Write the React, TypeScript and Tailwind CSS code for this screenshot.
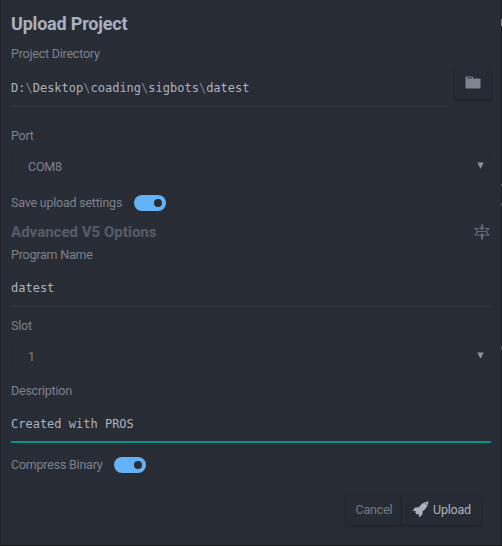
import type { ReactNode } from "react"

const Label = ({ children }: { children: ReactNode }) => (
  <div className="text-[12.5px] leading-4 tracking-[-0.22px] whitespace-nowrap text-[#7c818c]">{children}</div>
)

const TextField = ({ value, className }: { value: string; className: string }) => (
  <div
    className={`flex items-center whitespace-pre font-['DejaVu_Sans_Mono',monospace] text-[12px] text-[#abb2bf] ${className}`}
  >
    {value.split(/(\\)/).map((part, i) => (
      <span key={i} className={part === "\\" ? "text-[#7c818c]" : ""}>
        {part}
      </span>
    ))}
  </div>
)

const SelectField = ({ value }: { value: string }) => (
  <div className="flex h-[31px] items-center justify-between rounded-t-[3px] border border-b-0 border-[#262a32] pr-[6px] pb-px pl-[16px] text-[12.5px] tracking-[-0.22px] text-[#7c818c]">
    <span>{value}</span>
    <svg width="7" height="7" viewBox="0 0 7 7" className="-mt-[4px]" fill="#8c919c">
      <path d="M0.3 0.5H6.7L3.5 6.7Z" />
    </svg>
  </div>
)

const Toggle = () => (
  <div className="flex h-4 w-8 items-center justify-end rounded-full bg-[#64b2f6] pr-1">
    <div className="size-2 rounded-full bg-[#282c34]" />
  </div>
)

const FolderIcon = () => (
  <svg width="16" height="14" viewBox="0 0 16 14" className="-mt-0.5">
    <path d="M0.5 1.2Q0.5 0.5 1.2 0.5H7.3Q8 0.5 8 1.2V2.5H14.8Q15.5 2.5 15.5 3.2V11.8Q15.5 12.5 14.8 12.5H1.2Q0.5 12.5 0.5 11.8Z" fill="#7f8490" />
    <path d="M2 2H7" stroke="#282c34" />
  </svg>
)

// octicon-style "fold": two arrows closing on a creased strip
const FoldIcon = () => (
  <svg width="16" height="16" viewBox="0 0 16 16" className="mr-px" fill="none" stroke="#636873">
    <path d="M8 0.5V4M8 11.5V15.5" strokeWidth="2" />
    <path d="M4.8 3.5H11.2L8 6.6ZM4.8 12H11.2L8 8.9Z" fill="#636873" stroke="none" />
    <path d="M5 4.5H1.2L3.8 7.7L1.2 11H5M11 4.5H14.8L12.2 7.7L14.8 11H11" strokeWidth="1.2" />
    <path d="M3.8 7.5H12.2" />
  </svg>
)

const RocketIcon = () => (
  <svg width="17" height="17" viewBox="0 0 17 17" className="-mt-[2px]" fill="#abb2bf">
    <path d="M16.4 0.6C13.6 0.7 10.6 2 8.3 4.4L6.8 6.3L3.3 6.6L0.4 9.8L3.9 10L3.2 11.6L5.5 13.8L7 13.1L7.2 16.6L10.4 13.5L10.7 10.2L12.8 8.5C15.1 6.1 16.4 3.5 16.4 0.6Z" />
    <path d="M13 1.8L15.2 4" stroke="#282c34" strokeWidth="0.8" />
  </svg>
)

const App = () => {
  return (
    <div className="flex h-[546px] w-[502px] overflow-hidden border-b border-[#16171c] bg-[#282c34] font-['Roboto',sans-serif]">
      <div className="w-px bg-[#20232a]" />
      <div className="flex w-[500px] flex-col pt-3 pr-[10px] pl-[10px]">
        <h1 className="h-6 text-[18px] leading-6 font-bold tracking-[-0.2px] whitespace-nowrap text-[#a9b0c0]">
          Upload Project
        </h1>
        <div className="mt-[10px]">
          <Label>Project Directory</Label>
        </div>

        <div className="flex h-[45px]">
          <TextField value={"D:\\Desktop\\coading\\sigbots\\datest"} className="w-[438px] border-b border-[#31353e] pt-[7px]" />
          <button className="mt-[7px] ml-[6px] flex h-[30px] w-9 items-center justify-center rounded-[3px] bg-[#272b33] shadow-[0_1px_3px_#1b1e24]">
            <FolderIcon />
          </button>
        </div>

        <div className="mt-[21px]">
          <Label>Port</Label>
        </div>
        <div className="mt-2">
          <SelectField value="COM8" />
        </div>

        <div className="mt-3 flex h-4 items-center gap-3">
          <Label>Save upload settings</Label>
          <Toggle />
        </div>

        <div className="mt-[13px] flex h-4 items-center justify-between">
          <h2 className="text-[15px] leading-4 font-extrabold whitespace-nowrap text-[#555a65]">Advanced V5 Options</h2>
          <FoldIcon />
        </div>
        <div className="mt-[7px]">
          <Label>Program Name</Label>
        </div>
        <TextField value="datest" className="h-11 border-b border-[#31353e] pt-[6px]" />

        <div className="mt-[11px]">
          <Label>Slot</Label>
        </div>
        <div className="mt-2">
          <SelectField value="1" />
        </div>

        <div className="mt-[10px]">
          <Label>Description</Label>
        </div>
        <TextField value="Created with PROS" className="h-11 border-b-2 border-[#009688] pt-[8px]" />

        <div className="mt-[14px] flex h-4 items-center gap-[11px]">
          <Label>Compress Binary</Label>
          <Toggle />
        </div>

        <div className="mt-[22px] mr-[10px] flex h-[30px] justify-end gap-px text-[12.5px]">
          <button className="w-[55px] rounded-[3px] bg-[#272b33] pt-px pl-px tracking-[-0.2px] text-[#747984] shadow-[0_1px_3px_#1b1e24]">
            Cancel
          </button>
          <button className="flex w-[79px] items-center gap-[4px] rounded-[3px] bg-[#272b33] pt-px pl-[10px] tracking-[-0.2px] text-[#abb2bf] shadow-[0_1px_3px_#1b1e24]">
            <RocketIcon />
            Upload
          </button>
        </div>
      </div>
      {/* clipped edge of the editor behind the dialog */}
      <div className="flex w-px flex-col bg-[#1d1f25]">
        <div className="mt-[19px] h-[7px] bg-[#777b84]" />
        <div className="mt-[158px] h-[2px] bg-[#5b5f68]" />
        <div className="mt-[17px] h-[3px] bg-[#4b4e56]" />
        <div className="mt-[140px] h-[4px] bg-[#4b4e56]" />
      </div>
    </div>
  )
}

export default App
